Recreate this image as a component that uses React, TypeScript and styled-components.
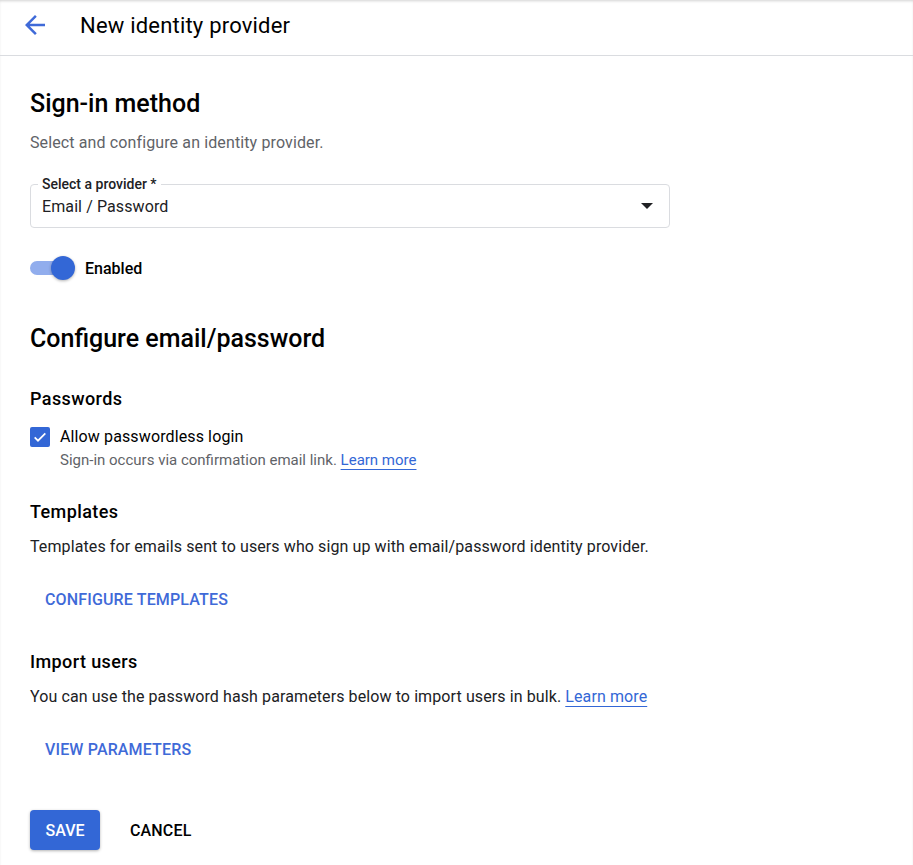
import React from "react"
import styled, { createGlobalStyle } from "styled-components"

const GlobalStyle = createGlobalStyle`
  body {
    margin: 0;
    background: #ffffff;
    font-family: Roboto, "Liberation Sans", Arial, sans-serif;
    color: #202124;
  }
`

const Page = styled.div`
  width: 913px;
  min-height: 865px;
  box-shadow: inset 0 2px 3px -1px rgba(0, 0, 0, 0.18);
`

const Header = styled.header`
  height: 56px;
  display: flex;
  align-items: center;
  border-bottom: 1px solid #dadce0;
  box-sizing: border-box;
  padding: 0 0 5px 20px;
`

const BackButton = styled.button`
  width: 30px;
  height: 30px;
  padding: 0;
  border: none;
  background: none;
  display: flex;
  align-items: center;
  justify-content: center;
  margin-right: 30px;
  cursor: pointer;
`

const Title = styled.h1`
  margin: 0;
  font-size: 22px;
  font-weight: 400;
  letter-spacing: 0.2px;
  color: #000000;
`

const Content = styled.main`
  padding: 32px 30px 0 30px;
  display: flex;
  flex-direction: column;
`

const SectionTitle = styled.h2<{ $top?: number }>`
  margin: ${(p) => p.$top ?? 0}px 0 0 0;
  font-size: 25px;
  font-weight: 500;
  line-height: 32px;
  color: #000000;
`

const SubTitle = styled.h3<{ $top: number }>`
  margin: ${(p) => p.$top}px 0 0 0;
  font-size: 18px;
  font-weight: 500;
  line-height: 24px;
  letter-spacing: 0.4px;
  color: #000000;
`

const Muted = styled.p`
  margin: 11px 0 0 0;
  font-size: 16px;
  line-height: 24px;
  letter-spacing: 0.12px;
  color: #5f6368;
`

const Body = styled.p`
  margin: 11px 0 0 0;
  font-size: 16px;
  line-height: 24px;
  letter-spacing: 0.1px;
  color: #202124;
`

const Field = styled.div`
  margin-top: 29px;
  width: 640px;
  height: 44px;
  box-sizing: border-box;
  border: 1px solid #dadce0;
  border-radius: 4px;
  padding: 0 16px 0 11px;
  display: flex;
  align-items: center;
  justify-content: space-between;
  position: relative;
`

const FieldLabel = styled.span`
  position: absolute;
  left: 7px;
  top: -9px;
  padding: 0 4px;
  background: #ffffff;
  font-size: 14px;
  font-weight: 500;
  line-height: 16px;
  color: #202124;
`

const FieldValue = styled.span`
  font-size: 16px;
  letter-spacing: 0.1px;
  color: #202124;
`

const Caret = styled.span`
  width: 0;
  height: 0;
  border-left: 6px solid transparent;
  border-right: 6px solid transparent;
  border-top: 6px solid #202124;
`

const ToggleRow = styled.label`
  margin-top: 28px;
  height: 24px;
  display: flex;
  align-items: center;
  gap: 10px;
`

const Track = styled.span`
  position: relative;
  width: 34px;
  height: 14px;
  border-radius: 7px;
  background: #91aded;
  margin-right: 11px;
`

const Thumb = styled.span`
  position: absolute;
  right: -11px;
  top: -5px;
  width: 24px;
  height: 24px;
  border-radius: 50%;
  background: #3367d6;
  box-shadow: 0 1px 3px rgba(0, 0, 0, 0.3);
`

const ToggleLabel = styled.span`
  font-size: 16px;
  font-weight: 500;
  color: #000000;
`

const CheckRow = styled.div`
  margin-top: 14px;
  display: flex;
  gap: 10px;
`

const Box = styled.span`
  width: 20px;
  height: 20px;
  border-radius: 2px;
  background: #3367d6;
  display: flex;
  align-items: center;
  justify-content: center;
  flex-shrink: 0;
  margin-top: 2px;
`

const CheckText = styled.div`
  display: flex;
  flex-direction: column;
`

const CheckLabel = styled.span`
  font-size: 16px;
  line-height: 24px;
  letter-spacing: 0.12px;
  color: #000000;
`

const CheckHint = styled.span`
  font-size: 15px;
  line-height: 22px;
  color: #5f6368;
`

const Link = styled.a`
  color: #3367d6;
  text-decoration: underline;
  text-underline-offset: 4px;
  text-decoration-thickness: 1px;
`

const TextButton = styled.button<{ $dark?: boolean }>`
  align-self: flex-start;
  border: none;
  background: none;
  font-family: inherit;
  font-size: 16px;
  font-weight: 500;
  letter-spacing: 0.15px;
  color: ${(p) => (p.$dark ? "#000000" : "#3f6ad8")};
  padding: 0 15px;
  height: 40px;
  cursor: pointer;
`

const ButtonSlot = styled.div`
  margin-top: 20px;
  display: flex;
`

const Actions = styled.div`
  margin-top: 41px;
  display: flex;
  gap: 15px;
`

const Primary = styled.button`
  height: 40px;
  width: 70px;
  border: none;
  border-radius: 4px;
  background: #3367d6;
  color: #ffffff;
  font-family: inherit;
  font-size: 16px;
  font-weight: 500;
  box-shadow: 0 1px 3px rgba(0, 0, 0, 0.3);
  cursor: pointer;
`

export default function App() {
  return (
    <Page>
      <GlobalStyle />
      <Header>
        <BackButton aria-label="Back">
          <svg width="30" height="30" viewBox="0 0 24 24">
            <path
              d="M20 11H7.83l5.59-5.59L12 4l-8 8 8 8 1.41-1.41L7.83 13H20v-2z"
              fill="#3f6ad8"
            />
          </svg>
        </BackButton>
        <Title>New identity provider</Title>
      </Header>
      <Content>
        <SectionTitle>Sign-in method</SectionTitle>
        <Muted>Select and configure an identity provider.</Muted>
        <Field>
          <FieldLabel>Select a provider *</FieldLabel>
          <FieldValue>Email / Password</FieldValue>
          <Caret />
        </Field>
        <ToggleRow>
          <Track>
            <Thumb />
          </Track>
          <ToggleLabel>Enabled</ToggleLabel>
        </ToggleRow>

        <SectionTitle $top={43}>Configure email/password</SectionTitle>

        <SubTitle $top={32}>Passwords</SubTitle>
        <CheckRow>
          <Box>
            <svg width="16" height="16" viewBox="0 0 24 24">
              <path
                d="M4 12.5l5 5L20 6.5"
                fill="none"
                stroke="#ffffff"
                strokeWidth="2.6"
              />
            </svg>
          </Box>
          <CheckText>
            <CheckLabel>Allow passwordless login</CheckLabel>
            <CheckHint>
              Sign-in occurs via confirmation email link.{" "}
              <Link href="#">Learn more</Link>
            </CheckHint>
          </CheckText>
        </CheckRow>

        <SubTitle $top={29}>Templates</SubTitle>
        <Body>
          Templates for emails sent to users who sign up with email/password
          identity provider.
        </Body>
        <ButtonSlot>
          <TextButton>CONFIGURE TEMPLATES</TextButton>
        </ButtonSlot>

        <SubTitle $top={31}>Import users</SubTitle>
        <Body>
          You can use the password hash parameters below to import users in
          bulk. <Link href="#">Learn more</Link>
        </Body>
        <ButtonSlot>
          <TextButton>VIEW PARAMETERS</TextButton>
        </ButtonSlot>

        <Actions>
          <Primary>SAVE</Primary>
          <TextButton $dark>CANCEL</TextButton>
        </Actions>
      </Content>
    </Page>
  )
}
